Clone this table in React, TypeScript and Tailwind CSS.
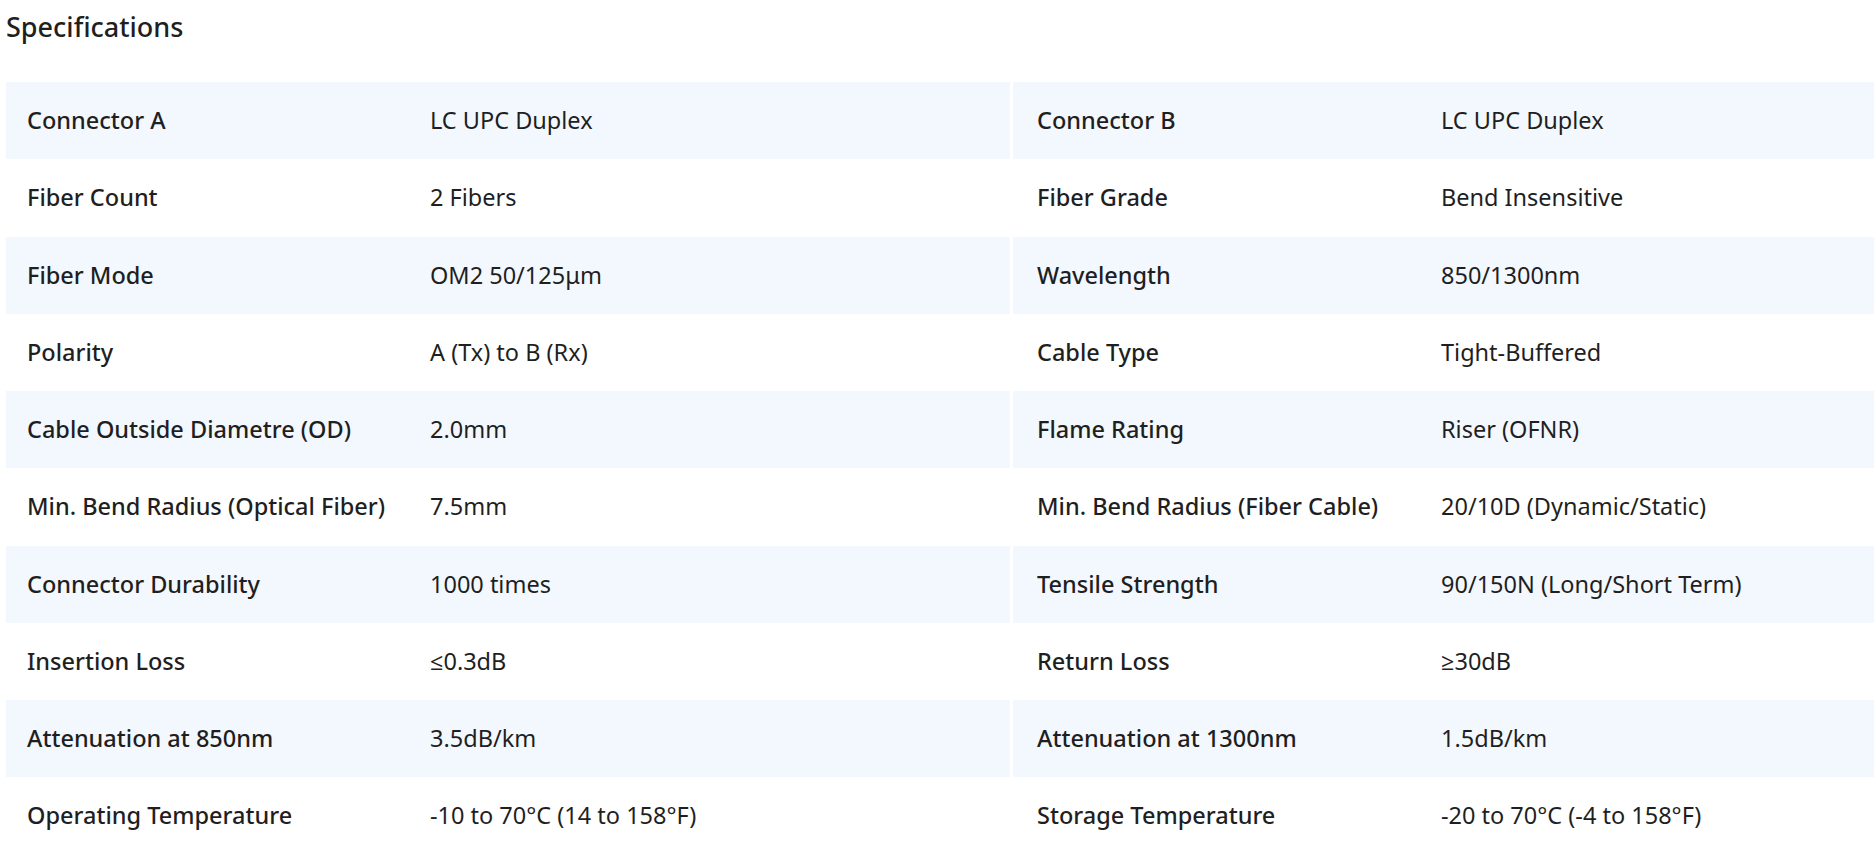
const specs: [string, string, string, string][] = [
  ['Connector A', 'LC UPC Duplex', 'Connector B', 'LC UPC Duplex'],
  ['Fiber Count', '2 Fibers', 'Fiber Grade', 'Bend Insensitive'],
  ['Fiber Mode', 'OM2 50/125μm', 'Wavelength', '850/1300nm'],
  ['Polarity', 'A (Tx) to B (Rx)', 'Cable Type', 'Tight-Buffered'],
  ['Cable Outside Diametre (OD)', '2.0mm', 'Flame Rating', 'Riser (OFNR)'],
  ['Min. Bend Radius (Optical Fiber)', '7.5mm', 'Min. Bend Radius (Fiber Cable)', '20/10D (Dynamic/Static)'],
  ['Connector Durability', '1000 times', 'Tensile Strength', '90/150N (Long/Short Term)'],
  ['Insertion Loss', '≤0.3dB', 'Return Loss', '≥30dB'],
  ['Attenuation at 850nm', '3.5dB/km', 'Attenuation at 1300nm', '1.5dB/km'],
  ['Operating Temperature', '-10 to 70°C (14 to 158°F)', 'Storage Temperature', '-20 to 70°C (-4 to 158°F)'],
];

export default function App() {
  return (
    <div className="w-screen overflow-hidden bg-white text-[#1f1f1f] font-['Noto_Sans','Open_Sans',sans-serif]">
      {/* Header */}
      <h2 className="pl-[6px] pt-[9px] text-[27px] font-medium leading-[36px]">Specifications</h2>

      {/* Spec table */}
      <div className="mt-[37px] w-[2024px] pl-[6px]">
        {specs.map(([la, va, lb, vb], i) => (
          <div key={la} className="flex h-[77.25px] gap-[3px] text-[23.5px]">
            <div className={`flex w-[1004px] items-center ${i % 2 === 0 ? 'bg-[#f3f8fe]' : 'bg-white'}`}>
              <span className="w-[404px] pl-[21px] font-medium">{la}</span>
              <span className="pl-[20px]">{va}</span>
            </div>
            <div className={`flex w-[1004px] items-center ${i % 2 === 0 ? 'bg-[#f3f8fe]' : 'bg-white'}`}>
              <span className="w-[404px] pl-[24px] font-medium">{lb}</span>
              <span className="pl-[24px]">{vb}</span>
            </div>
          </div>
        ))}
      </div>
    </div>
  );
}
